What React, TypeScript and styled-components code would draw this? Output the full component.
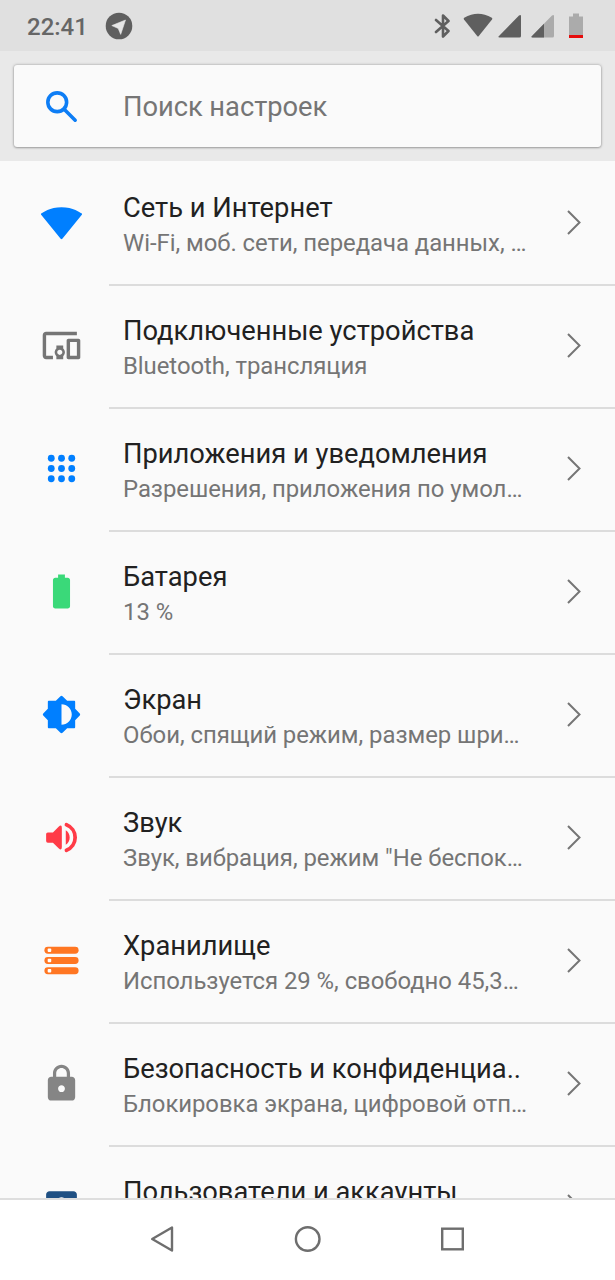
import React from 'react';
import styled, { createGlobalStyle } from 'styled-components';

const GlobalStyle = createGlobalStyle`
  * { box-sizing: border-box; }
  body {
    margin: 0;
    background: #fafafa;
    font-family: Roboto, sans-serif;
    overflow: hidden;
  }
`;

const Screen = styled.div`
  width: 615px;
  height: 1280px;
  display: flex;
  flex-direction: column;
  background: #fafafa;
`;

const StatusBar = styled.header`
  height: 51px;
  flex: none;
  display: flex;
  align-items: center;
  justify-content: space-between;
  padding: 0 31px 0 27px;
  background: #e0e0e0;
`;

const StatusGroup = styled.div`
  display: flex;
  align-items: center;
`;

const Clock = styled.span`
  width: 78px;
  padding-top: 3px;
  font-size: 24px;
  line-height: 48px;
  font-weight: 500;
  color: #666;
`;

const StatusIcon = styled.svg<{ $gap?: number }>`
  display: block;
  margin-left: ${(p) => p.$gap ?? 0}px;
`;

const SearchArea = styled.div`
  height: 110px;
  flex: none;
  padding: 14px;
  background: #e9e9e9;
`;

const SearchCard = styled.div`
  height: 82px;
  display: flex;
  align-items: center;
  padding-left: 27px;
  border-radius: 3px;
  background: #fafafa;
  box-shadow: 0 0 3px rgba(0, 0, 0, 0.35), 0 1px 2px rgba(0, 0, 0, 0.2);
`;

const SearchText = styled.span`
  margin-left: 41px;
  padding-top: 2px;
  font-size: 27.3px;
  line-height: 32px;
  letter-spacing: -0.04px;
  color: #757575;
`;

const Icon = styled.svg`
  display: block;
  flex: none;
  width: 41px;
  height: 41px;
`;

const List = styled.main`
  flex: 1;
  min-height: 0;
  overflow: hidden;
`;

const RowBody = styled.div`
  flex: 1;
  min-width: 0;
  height: 123px;
  margin-left: 27px;
  padding: 0 33px 0 14px;
  display: flex;
  align-items: center;
  justify-content: space-between;
  box-shadow: inset 0 2px #dcdcdc;
`;

const Row = styled.div`
  height: 123px;
  display: flex;
  align-items: center;
  padding-left: 41px;

  &:first-child ${RowBody} {
    box-shadow: none;
  }
`;

const Labels = styled.div`
  padding-top: 4px;
  white-space: nowrap;
`;

const Title = styled.div`
  font-size: 27.3px;
  line-height: 32px;
  color: #212121;
`;

const Summary = styled.div`
  margin-top: 5px;
  min-height: 28px;
  font-size: 23.9px;
  line-height: 28px;
  letter-spacing: -0.04px;
  color: #757575;
`;

const Chevron = styled.svg`
  display: block;
  flex: none;
`;

const NavBar = styled.nav`
  height: 82px;
  flex: none;
  display: flex;
  align-items: center;
  justify-content: center;
  gap: 117px;
  padding-bottom: 2px;
  border-top: 2px solid #dedede;
  background: #fff;
`;

type Entry = { title: string; summary: string; color: string; icon: React.ReactNode };

const entries: Entry[] = [
  {
    title: 'Сеть и Интернет',
    summary: 'Wi-Fi, моб. сети, передача данных, …',
    color: '#007fff',
    icon: <path d="M11.5 21.500Q12 22 12.500 21.500L23.900 7.500q.3-.5-.2-.9C23.200 6.200 18.700 3 12 3S.8 6.200.3 6.600q-.5.4-.2.9z" />,
  },
  {
    title: 'Подключенные устройства',
    summary: 'Bluetooth, трансляция',
    color: '#757575',
    icon: (
      <path d="M3 6h18V4H3c-1.1 0-2 .9-2 2v12c0 1.1.9 2 2 2h4v-2H3V6zm10 6H9v1.78c-.61.55-1 1.33-1 2.22s.39 1.67 1 2.22V20h4v-1.78c.61-.55 1-1.34 1-2.22s-.39-1.67-1-2.22V12zm-2 5.5c-.83 0-1.5-.67-1.5-1.5s.67-1.5 1.5-1.5 1.5.67 1.5 1.5-.67 1.5-1.5 1.5zM22 8h-6c-.5 0-1 .5-1 1v10c0 .5.5 1 1 1h6c.5 0 1-.5 1-1V9c0-.5-.5-1-1-1zm-1 10h-4v-8h4v8z" />
    ),
  },
  {
    title: 'Приложения и уведомления',
    summary: 'Разрешения, приложения по умол…',
    color: '#007fff',
    icon: [6, 12, 18].map((y) => [6, 12, 18].map((x) => <circle key={`${x}-${y}`} cx={x} cy={y} r="2" />)),
  },
  {
    title: 'Батарея',
    summary: '13 %',
    color: '#3ad979',
    icon: <path d="M15.67 4H14V2h-4v2H8.33C7.6 4 7 4.6 7 5.33v15.33C7 21.4 7.6 22 8.33 22h7.33c.74 0 1.34-.6 1.34-1.33V5.33C17 4.6 16.4 4 15.67 4z" />,
  },
  {
    title: 'Экран',
    summary: 'Обои, спящий режим, размер шри…',
    color: '#007fff',
    icon: (
      <path d="M20 15.310 22.700 12.600q.5-.6 0-1.200L20 8.690V4.500q0-.5-.5-.5h-4.190L12.600 1.300q-.6-.5-1.200 0L8.690 4H4.500q-.5 0-.5.500v4.190L1.300 11.400q-.5.6 0 1.200L4 15.310v4.190q0 .5.500.5h4.190l2.710 2.700q.6.500 1.200 0l2.710-2.700h4.190q.5 0 .5-.5v-4.190zM12 18V6c3.310 0 6 2.690 6 6s-2.690 6-6 6z" />
    ),
  },
  {
    title: 'Звук',
    summary: 'Звук, вибрация, режим "Не беспок…',
    color: '#ff3b47',
    icon: (
      <>
        <path d="M3 10v4q0 1 1 1h3l3.300 3.300q1.900 1.700 1.900-.7V6.400q0-2.400-1.900-.7L7 9H4q-1 0-1 1zm13.800 2c0-1.900-.9-3.400-2.300-4.200v8.400c1.400-.8 2.300-2.300 2.300-4.200z" />
        <path d="M14.900 4.550a8 8 0 0 1 0 14.900" fill="none" stroke="#ff3b47" strokeWidth="2.200" strokeLinecap="round" />
      </>
    ),
  },
  {
    title: 'Хранилище',
    summary: 'Используется 29 %, свободно 45,3…',
    color: '#ff7622',
    icon: [4, 10, 16].map((y) => (
      <React.Fragment key={y}>
        <rect x="2" y={y} width="20" height="4" rx="2" />
        <rect x="3.900" y={y + 1} width="2.100" height="2" rx="0.500" fill="#fff" />
      </React.Fragment>
    )),
  },
  {
    title: 'Безопасность и конфиденциа..',
    summary: 'Блокировка экрана, цифровой отп…',
    color: '#858585',
    icon: (
      <path d="M18 8h-1V6c0-2.760-2.240-5-5-5S7 3.240 7 6v2H6c-1.100 0-2 .9-2 2v10c0 1.100.9 2 2 2h12c1.100 0 2-.9 2-2V10c0-1.100-.9-2-2-2zm-6 9c-1.100 0-2-.9-2-2s.9-2 2-2 2 .9 2 2-.9 2-2 2zm3.100-9H8.900V6c0-1.710 1.390-3.100 3.100-3.100s3.100 1.390 3.100 3.100v2z" />
    ),
  },
  {
    title: 'Пользователи и аккаунты',
    summary: '',
    color: '#1f5083',
    icon: (
      <path d="M3 5v14c0 1.100.89 2 2 2h14c1.100 0 2-.9 2-2V5c0-1.100-.9-2-2-2H5c-1.110 0-2 .9-2 2zm12 4.600c0 1.660-1.340 3-3 3s-3-1.340-3-3 1.340-3 3-3 3 1.340 3 3zm-9 8c0-2 4-3.100 6-3.100s6 1.100 6 3.100v1H6v-1z" />
    ),
  },
];

export default function App() {
  return (
    <Screen>
      <GlobalStyle />
      <StatusBar>
        <StatusGroup>
          <Clock>22:41</Clock>
          <StatusIcon width="28" height="28" viewBox="0 0 28 28">
            <circle cx="14" cy="14" r="13.300" fill="#5f5f5f" />
            <path d="M20.500 8 6.800 13.600l6.400 2.800 2.500 6z" fill="#e6e6e6" stroke="#e6e6e6" strokeWidth="0.600" strokeLinejoin="round" />
          </StatusIcon>
        </StatusGroup>
        <StatusGroup>
          <StatusIcon width="16" height="26" viewBox="0 0 16 26">
            <path d="M2 7 14.500 18 9 23.500V2.500L14.500 8 2 19" fill="none" stroke="#5f5f5f" strokeWidth="2.600" strokeLinecap="round" strokeLinejoin="round" />
          </StatusIcon>
          <StatusIcon $gap={13} width="30" height="26" viewBox="0 0 30 26">
            <path d="M1.200 4.800Q15-3.500 28.800 4.800q.9.700.2 1.600L15.800 23q-.8 1-1.600 0L1 6.400q-.7-.9.200-1.600z" fill="#5f5f5f" />
          </StatusIcon>
          <StatusIcon $gap={5} width="23" height="26" viewBox="0 0 23 26">
            <path d="M1 23 21 2.500q2-1.500 2 .8V23q0 1.500-1.500 1.500h-20Q-.5 24.500 1 23z" fill="#5f5f5f" />
          </StatusIcon>
          <StatusIcon $gap={10} width="23" height="26" viewBox="0 0 23 26">
            <path d="M1 23 21 2.500q2-1.500 2 .8V23q0 1.500-1.500 1.500h-20Q-.5 24.500 1 23z" fill="#ababab" />
            <path d="M1 23 13 10.700v13.800H1.500Q-.5 24.500 1 23z" fill="#5f5f5f" />
          </StatusIcon>
          <StatusIcon $gap={14} width="16" height="26" viewBox="0 0 16 26">
            <path d="M1 3.500h4V.5h6v3h4V22H1z" fill="#ababab" />
            <path d="M1 22h14v3H1z" fill="#e60c0c" />
          </StatusIcon>
        </StatusGroup>
      </StatusBar>
      <SearchArea>
        <SearchCard>
          <Icon viewBox="0 0 24 24" fill="none" stroke="#0d7df5" strokeWidth="2.100" strokeLinecap="round">
            <circle cx="9.500" cy="9.500" r="5.500" />
            <path d="m14 14 6 6" />
          </Icon>
          <SearchText>Поиск настроек</SearchText>
        </SearchCard>
      </SearchArea>
      <List>
        {entries.map((e) => (
          <Row key={e.title}>
            <Icon viewBox="0 0 24 24" fill={e.color}>{e.icon}</Icon>
            <RowBody>
              <Labels>
                <Title>{e.title}</Title>
                <Summary>{e.summary}</Summary>
              </Labels>
              <Chevron width="16" height="26" viewBox="0 0 16 26">
                <path d="m2 1 11.500 11.500L2 24" fill="none" stroke="#757575" strokeWidth="2" />
              </Chevron>
            </RowBody>
          </Row>
        ))}
      </List>
      <NavBar>
        <svg width="28" height="30" viewBox="0 0 28 30">
          <path d="M23 3.500v23L3.200 15z" fill="none" stroke="#6e6e6e" strokeWidth="2.400" strokeLinejoin="round" />
        </svg>
        <svg width="28" height="30" viewBox="0 0 28 30">
          <circle cx="13.700" cy="15" r="11.800" fill="none" stroke="#6e6e6e" strokeWidth="2.400" />
        </svg>
        <svg width="28" height="30" viewBox="0 0 28 30">
          <rect x="3.200" y="4.700" width="20.600" height="20.600" fill="none" stroke="#6e6e6e" strokeWidth="2.400" />
        </svg>
      </NavBar>
    </Screen>
  );
}
